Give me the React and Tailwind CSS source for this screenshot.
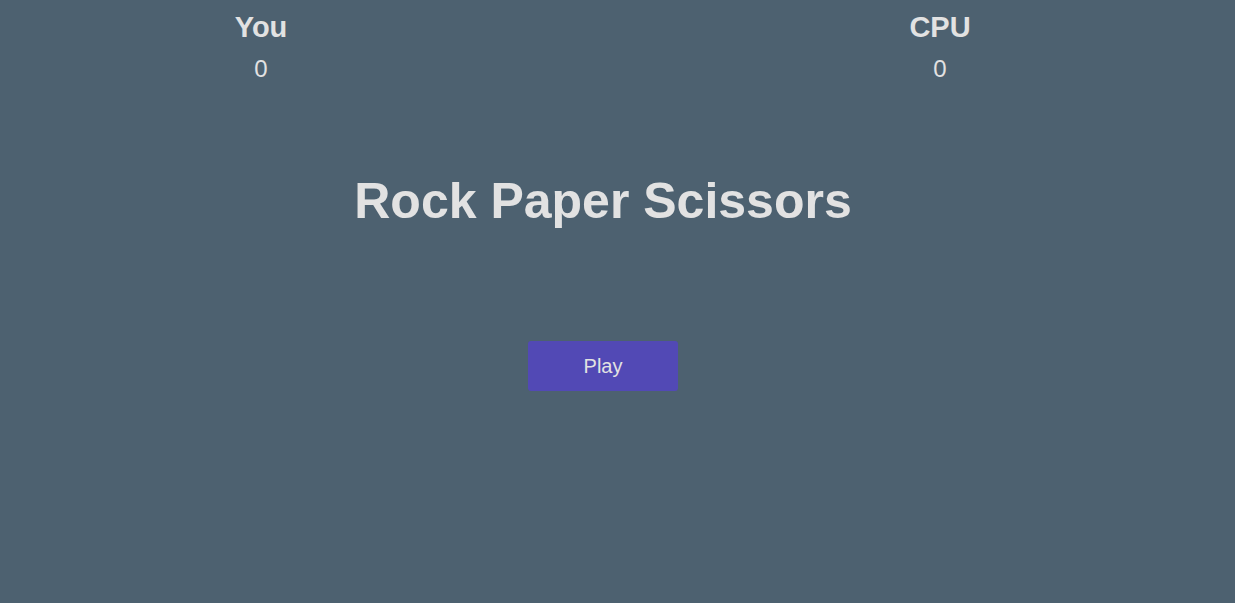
export default function App() {
  return (
    <div className="min-h-screen w-full bg-[#4d6170] text-[#e2e2e2] font-['Liberation_Sans',Arial,sans-serif]">
      <div className="w-[1206px] flex flex-col items-center">
        <div className="w-full pt-[13px] flex">
          <div className="ml-[161px] w-[200px] flex flex-col items-center">
            <div className="text-[29px] font-bold leading-none">You</div>
            <div className="mt-[15px] text-[24px] leading-none">0</div>
          </div>
          <div className="ml-[479px] w-[200px] flex flex-col items-center">
            <div className="text-[29px] font-bold leading-none">CPU</div>
            <div className="mt-[15px] text-[24px] leading-none">0</div>
          </div>
        </div>
        <h1 className="mt-[95px] text-[50px] font-bold leading-none">Rock Paper Scissors</h1>
        <button className="mt-[115px] w-[150px] h-[50px] rounded-[3px] bg-[#5249b5] text-[20px] text-[#e2e2e2]">
          Play
        </button>
      </div>
    </div>
  );
}
